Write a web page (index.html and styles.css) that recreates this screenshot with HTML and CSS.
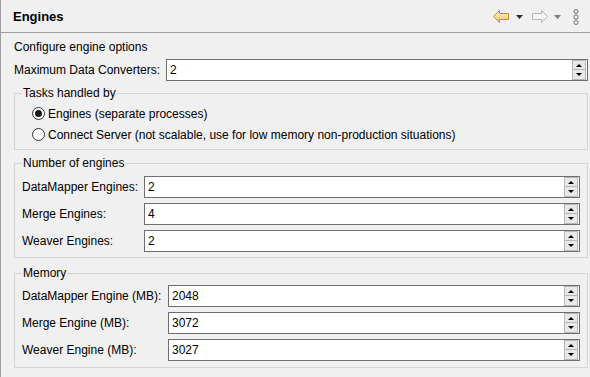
FILE: index.html
```html
<!DOCTYPE html>
<html lang="en">
<head>
  <meta charset="UTF-8">
  <title>Engines</title>
  <link rel="stylesheet" href="styles.css">
</head>
<body>
  <div class="view">
    <div class="view-header">
      <h1 class="view-title">Engines</h1>
      <div class="toolbar">
        <svg class="tb-back" width="16" height="13" viewBox="0 0 16 13">
          <defs>
            <linearGradient id="backFill" x1="0" y1="0" x2="0" y2="1">
              <stop offset="0" stop-color="#fff3c4"/>
              <stop offset="1" stop-color="#f7c955"/>
            </linearGradient>
          </defs>
          <polygon points="0.5,6.5 6.5,0.5 6.5,3.5 15.5,3.5 15.5,9.5 6.5,9.5 6.5,12.5" fill="url(#backFill)" stroke="#c98f1a"/>
        </svg>
        <svg class="tb-drop" width="7" height="4" viewBox="0 0 7 4"><polygon points="0,0 7,0 3.5,4" fill="#2b2b2b"/></svg>
        <svg class="tb-fwd" width="16" height="13" viewBox="0 0 16 13">
          <polygon points="15.5,6.5 9.5,0.5 9.5,3.5 0.5,3.5 0.5,9.5 9.5,9.5 9.5,12.5" fill="#f6f6f6" stroke="#b4b4b4"/>
        </svg>
        <svg class="tb-drop tb-drop-off" width="7" height="4" viewBox="0 0 7 4"><polygon points="0,0 7,0 3.5,4" fill="#7a7a7a"/></svg>
        <svg class="tb-menu" width="6" height="16" viewBox="0 0 6 16">
          <circle cx="3" cy="2.5" r="2" fill="#fff" stroke="#6a6a6a"/>
          <circle cx="3" cy="8" r="2" fill="#fff" stroke="#6a6a6a"/>
          <circle cx="3" cy="13.5" r="2" fill="#fff" stroke="#6a6a6a"/>
        </svg>
      </div>
    </div>

    <div class="view-body">
      <p class="intro">Configure engine options</p>

      <div class="field field-top">
        <label class="field-label">Maximum Data Converters:</label>
        <div class="spin"><span class="spin-value">2</span><span class="spin-btns"><span class="spin-up"></span><span class="spin-down"></span></span></div>
      </div>

      <fieldset class="group group-tasks">
        <legend>Tasks handled by</legend>
        <div class="radio"><span class="radio-dot checked"></span>Engines (separate processes)</div>
        <div class="radio"><span class="radio-dot"></span>Connect Server (not scalable, use for low memory non-production situations)</div>
      </fieldset>

      <fieldset class="group group-engines">
        <legend>Number of engines</legend>
        <div class="field">
          <label class="field-label">DataMapper Engines:</label>
          <div class="spin"><span class="spin-value">2</span><span class="spin-btns"><span class="spin-up"></span><span class="spin-down"></span></span></div>
        </div>
        <div class="field">
          <label class="field-label">Merge Engines:</label>
          <div class="spin"><span class="spin-value">4</span><span class="spin-btns"><span class="spin-up"></span><span class="spin-down"></span></span></div>
        </div>
        <div class="field">
          <label class="field-label">Weaver Engines:</label>
          <div class="spin"><span class="spin-value">2</span><span class="spin-btns"><span class="spin-up"></span><span class="spin-down"></span></span></div>
        </div>
      </fieldset>

      <fieldset class="group group-memory">
        <legend>Memory</legend>
        <div class="field">
          <label class="field-label">DataMapper Engine (MB):</label>
          <div class="spin"><span class="spin-value">2048</span><span class="spin-btns"><span class="spin-up"></span><span class="spin-down"></span></span></div>
        </div>
        <div class="field">
          <label class="field-label">Merge Engine (MB):</label>
          <div class="spin"><span class="spin-value">3072</span><span class="spin-btns"><span class="spin-up"></span><span class="spin-down"></span></span></div>
        </div>
        <div class="field">
          <label class="field-label">Weaver Engine (MB):</label>
          <div class="spin"><span class="spin-value">3027</span><span class="spin-btns"><span class="spin-up"></span><span class="spin-down"></span></span></div>
        </div>
      </fieldset>
    </div>
  </div>
</body>
</html>
```

FILE: styles.css
```css
html, body {
  margin: 0;
  padding: 0;
  height: 100%;
}

body {
  font-family: "Liberation Sans", Arial, sans-serif;
  font-size: 12px;
  color: #000;
  background-color: #f0f0f0;
}

.view {
  height: 100%;
  border-left: 1px solid #a0a0a0;
  box-sizing: border-box;
}

/* header with title and toolbar */
.view-header {
  height: 32px;
  border-bottom: 1px solid #a0a0a0;
  display: flex;
  align-items: center;
  justify-content: space-between;
  padding-left: 12px;
}

.view-title {
  margin: 0;
  font-size: 13px;
  font-weight: bold;
  line-height: 16px;
  padding-top: 1px;
}

.toolbar {
  display: flex;
  align-items: center;
  padding-right: 11px;
  padding-top: 1px;
}

.toolbar svg {
  display: block;
}

.tb-back {
  margin-right: 7px;
}

.tb-drop {
  margin-right: 9px;
  margin-top: 1px;
}

.tb-fwd {
  margin-right: 6px;
}

.tb-drop-off {
  margin-right: 12px;
}

/* body */
.view-body {
  padding: 0 2px 0 13px;
}

.intro {
  margin: 6px 0 0 0;
  line-height: 16px;
}

.field {
  display: flex;
  align-items: center;
  height: 22px;
}

.field-top {
  margin-top: 4px;
}

.field-label {
  flex: none;
  line-height: 16px;
}

.field-top .field-label {
  width: 152px;
}

.group-engines .field-label {
  width: 122px;
}

.group-memory .field-label {
  width: 146px;
}

.group-engines .field + .field,
.group-memory .field + .field {
  margin-top: 5px;
}

/* spinner input */
.spin {
  flex: 1;
  height: 22px;
  box-sizing: border-box;
  border: 1px solid #6e6e6e;
  background-color: #fff;
  display: flex;
}

.spin-value {
  flex: 1;
  padding-left: 3px;
  line-height: 20px;
}

.spin-btns {
  display: flex;
  flex-direction: column;
  width: 14px;
  margin-right: 1px;
}

.spin-up, .spin-down {
  flex: none;
  box-sizing: border-box;
  border: 1px solid #b9b9b9;
  background-color: #e8e8e8;
  display: flex;
  align-items: center;
  justify-content: center;
}

.spin-up {
  height: 10px;
}

.spin-down {
  height: 10px;
  border-top: none;
}

.spin-up::after {
  content: "";
  border-left: 3px solid transparent;
  border-right: 3px solid transparent;
  border-bottom: 3px solid #000;
}

.spin-down::after {
  content: "";
  border-left: 3px solid transparent;
  border-right: 3px solid transparent;
  border-top: 3px solid #000;
}

/* group boxes */
.group {
  margin: 0;
  border: 1px solid #d5d5d5;
  padding: 0 7px;
  min-width: 0;
}

.group legend {
  padding: 0 1px;
  line-height: 16px;
}

.group-tasks {
  margin-top: 4px;
  padding-top: 2px;
  padding-bottom: 4px;
}

.group-engines {
  margin-top: 5px;
  padding-top: 5px;
  padding-bottom: 5px;
}

.group-memory {
  margin-top: 7px;
  padding-top: 4px;
  padding-bottom: 6px;
}

/* radio buttons */
.radio {
  display: flex;
  align-items: center;
  height: 21px;
  padding-left: 10px;
}

.radio-dot {
  width: 13px;
  height: 13px;
  box-sizing: border-box;
  border: 1px solid #333;
  border-radius: 50%;
  background-color: #fff;
  margin-right: 3px;
  display: flex;
  align-items: center;
  justify-content: center;
}

.radio-dot.checked::after {
  content: "";
  width: 7px;
  height: 7px;
  border-radius: 50%;
  background-color: #1a1a1a;
}
```
